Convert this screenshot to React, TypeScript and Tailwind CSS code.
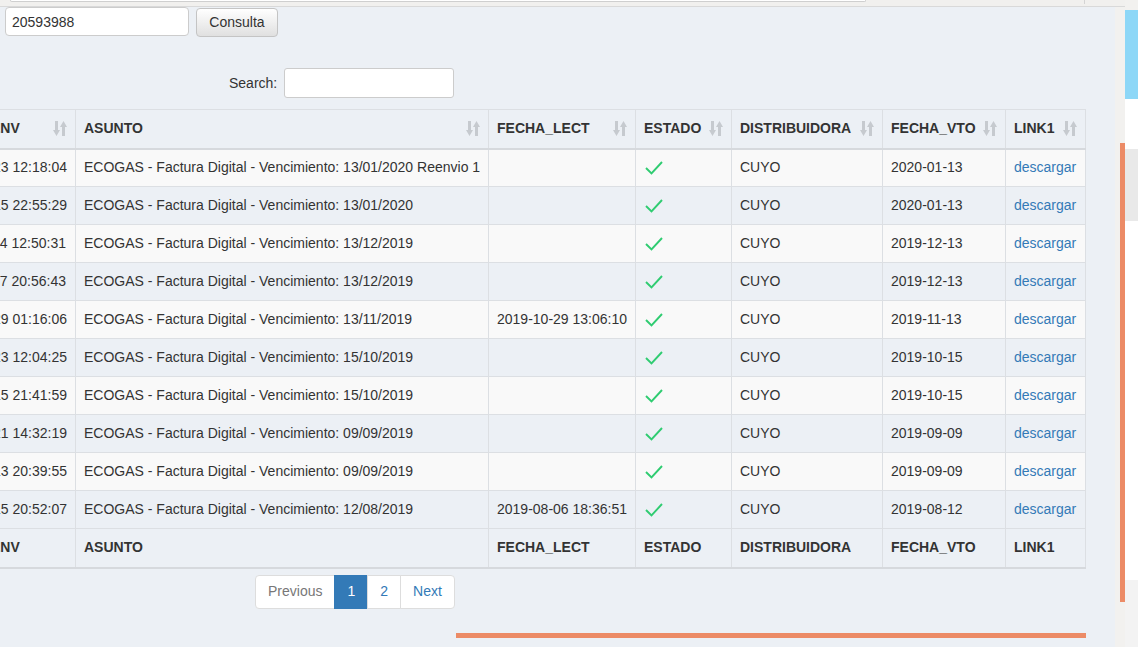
import React from 'react'

const rows = [
    { env: '2019-12-23 12:18:04', asunto: 'ECOGAS - Factura Digital - Vencimiento: 13/01/2020 Reenvio 1', lect: '', vto: '2020-01-13' },
    { env: '2019-12-15 22:55:29', asunto: 'ECOGAS - Factura Digital - Vencimiento: 13/01/2020', lect: '', vto: '2020-01-13' },
    { env: '2019-11-24 12:50:31', asunto: 'ECOGAS - Factura Digital - Vencimiento: 13/12/2019', lect: '', vto: '2019-12-13' },
    { env: '2019-11-17 20:56:43', asunto: 'ECOGAS - Factura Digital - Vencimiento: 13/12/2019', lect: '', vto: '2019-12-13' },
    { env: '2019-10-29 01:16:06', asunto: 'ECOGAS - Factura Digital - Vencimiento: 13/11/2019', lect: '2019-10-29 13:06:10', vto: '2019-11-13' },
    { env: '2019-09-23 12:04:25', asunto: 'ECOGAS - Factura Digital - Vencimiento: 15/10/2019', lect: '', vto: '2019-10-15' },
    { env: '2019-09-15 21:41:59', asunto: 'ECOGAS - Factura Digital - Vencimiento: 15/10/2019', lect: '', vto: '2019-10-15' },
    { env: '2019-08-21 14:32:19', asunto: 'ECOGAS - Factura Digital - Vencimiento: 09/09/2019', lect: '', vto: '2019-09-09' },
    { env: '2019-08-13 20:39:55', asunto: 'ECOGAS - Factura Digital - Vencimiento: 09/09/2019', lect: '', vto: '2019-09-09' },
    { env: '2019-07-15 20:52:07', asunto: 'ECOGAS - Factura Digital - Vencimiento: 12/08/2019', lect: '2019-08-06 18:36:51', vto: '2019-08-12' },
]

const columns = ['FECHA_ENV', 'ASUNTO', 'FECHA_LECT', 'ESTADO', 'DISTRIBUIDORA', 'FECHA_VTO', 'LINK1']
const widths = ['w-[146px]', 'w-[413px]', 'w-[147px]', 'w-[96px]', 'w-[151px]', 'w-[123px]', 'w-[80px]']

const SortIcon = () => (
    <svg width="14" height="15" viewBox="0 0 14 15" className="fill-[#c6cacf] shrink-0">
        <path d="M2 0h3v9h2l-3.5 6L0 9h2z" />
        <path d="M9 15h3V6h2l-3.5-6L7 6h2z" />
    </svg>
)

const Check = () => (
    <svg width="18" height="15" viewBox="0 0 18 15" className="ml-[1px]">
        <polyline points="1,8 6.5,13.5 17,2" fill="none" stroke="#2fcc71" strokeWidth="1.9" />
    </svg>
)

// first column is scrolled partly out of view in the original
const firstHead = (i: number) => (i === 0 ? 'relative -left-[3px]' : '')

const App = () => {
    return (
        <div className="w-[1138px] h-[647px] overflow-hidden flex bg-[#f2f1ef] text-[14px] text-[#333] font-['Liberation_Sans',Arial,sans-serif]">
            <div className="w-[1125px] flex flex-col">
                <div className="h-[7px] shrink-0 border-b border-[#d9d9d9] bg-[#f1f0ee] relative">
                    <div className="ml-[10px] w-[856px] h-[2px] bg-white border-b border-x border-[#cfcfcf] rounded-b-[2px]" />
                    <div className="absolute left-[1084px] top-0 w-px h-[4px] bg-[#d4d4d4]" />
                </div>
                <div className="flex flex-1">
                    <div className="w-[1115px] bg-[#ecf0f5] flex flex-col">
                        <div className="flex gap-[7px] pl-[5px]">
                            <input
                                className="w-[184px] h-[29px] bg-white border border-[#ccc] rounded-[4px] pl-[6px] outline-none text-[14px] text-[#333]"
                                type="text"
                                defaultValue="20593988"
                            />
                            <button className="w-[82px] h-[29px] mt-px border border-[#c4c4c4] rounded-[4px] bg-gradient-to-b from-white to-[#e0e0e0] text-[#333] text-[14px]">
                                Consulta
                            </button>
                        </div>

                        <div className="flex items-center gap-[7px] pl-[229px] mt-[31px]">
                            <span>Search:</span>
                            <input className="w-[170px] h-[30px] bg-white border border-[#ccc] rounded-[3px] outline-none" type="text" />
                        </div>

                        <div className="mt-[11px] ml-[-71px]">
                            <table className="table-fixed border-collapse w-[1156px]">
                                <colgroup>
                                    {widths.map((w, i) => <col key={i} className={w} />)}
                                </colgroup>
                                <thead>
                                    <tr className="h-[39px]">
                                        {columns.map((c, i) => (
                                            <th key={c} className="border border-[#dcdfe3] border-b-2 border-b-[#d6d9dd] px-[8px] py-0 text-left font-bold">
                                                <div className="flex items-center justify-between">
                                                    <span className={firstHead(i)}>{c}</span>
                                                    <SortIcon />
                                                </div>
                                            </th>
                                        ))}
                                    </tr>
                                </thead>
                                <tbody>
                                    {rows.map((r, i) => (
                                        <tr key={i} className={`h-[38px] ${i % 2 === 0 ? 'bg-[#f9f9f9]' : ''}`}>
                                            <td className="border border-[#dcdfe3] px-[8px] py-0 whitespace-nowrap">
                                                <span className="relative -left-[1px]">{r.env}</span>
                                            </td>
                                            <td className="border border-[#dcdfe3] px-[8px] py-0 whitespace-nowrap">{r.asunto}</td>
                                            <td className="border border-[#dcdfe3] px-[8px] py-0 whitespace-nowrap">{r.lect}</td>
                                            <td className="border border-[#dcdfe3] px-[8px] py-0"><Check /></td>
                                            <td className="border border-[#dcdfe3] px-[8px] py-0">CUYO</td>
                                            <td className="border border-[#dcdfe3] px-[8px] py-0">{r.vto}</td>
                                            <td className="border border-[#dcdfe3] px-[8px] py-0">
                                                <a href="#" className="text-[#337ab7]">descargar</a>
                                            </td>
                                        </tr>
                                    ))}
                                </tbody>
                                <tfoot>
                                    <tr className="h-[39px]">
                                        {columns.map((c, i) => (
                                            <th key={c} className="border border-[#dcdfe3] border-b-2 border-b-[#d6d9dd] px-[8px] py-0 text-left font-bold">
                                                <span className={firstHead(i)}>{c}</span>
                                            </th>
                                        ))}
                                    </tr>
                                </tfoot>
                            </table>
                        </div>

                        <div className="flex ml-[255px] mt-[6px] h-[34px]">
                            <span className="px-[12px] flex items-center bg-white border border-[#ddd] rounded-l-[4px] text-[#777]">Previous</span>
                            <span className="px-[12px] flex items-center bg-[#337ab7] border border-[#337ab7] text-white -ml-px">1</span>
                            <a href="#" className="px-[12px] flex items-center bg-white border border-[#ddd] text-[#337ab7] -ml-px">2</a>
                            <a href="#" className="px-[12px] flex items-center bg-white border border-[#ddd] rounded-r-[4px] text-[#337ab7] -ml-px">Next</a>
                        </div>

                        <div className="ml-[456px] mt-[24px] w-[630px] h-[5px] bg-[#ec8b66]" />
                    </div>
                    <div className="w-[10px] bg-[#f2f1ef] pl-[5px]">
                        <div className="mt-[136px] w-[5px] h-[459px] bg-[#ec8b66]" />
                    </div>
                </div>
            </div>
            <div className="w-[13px] flex flex-col">
                <div className="h-[10px] bg-[#f2f1ef]" />
                <div className="h-[89px] bg-[#8dd7f7]" />
                <div className="h-[50px] bg-white" />
                <div className="h-[72px] bg-[#e9e9e9]" />
                <div className="h-[359px] bg-white" />
                <div className="flex-1 bg-[#f3f3f3]" />
            </div>
        </div>
    )
}

export default App
